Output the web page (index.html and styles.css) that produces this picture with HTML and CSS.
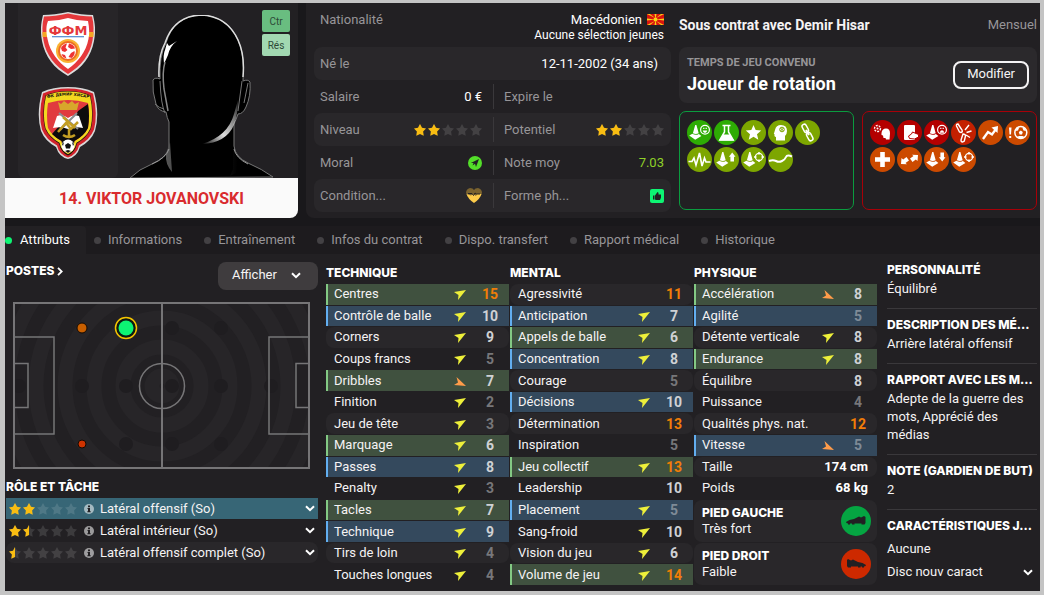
FILE: index.html
```html
<!DOCTYPE html>
<html lang="fr">
<head>
    <meta charset="UTF-8">
    <meta name="viewport" content="width=device-width, initial-scale=1.0">
    <title>Viktor Jovanovski</title>
    <link rel="stylesheet" href="styles.css">
</head>
<body>
    <!-- shared icons -->
    <svg class="sprite" aria-hidden="true">
        <defs>
            <path id="star" d="M6 0l2 3.700 4 .7-2.900 3 .6 4.300L6 9.900l-3.700 1.800.6-4.300L0 4.400l4-.7z"/>
            <g id="five">
                <use href="#star"/><use href="#star" x="14"/><use href="#star" x="28"/><use href="#star" x="42"/><use href="#star" x="56"/>
            </g>
            <symbol id="up" viewBox="0 0 12 10"><path fill="#eef03a" d="M0 2L12 0 4 10 4.500 5z"/></symbol>
            <symbol id="down" viewBox="0 0 12 10"><path fill="#ff9c4a" d="M2.500 0L12 9 0 8 4 5.500z"/></symbol>
            <symbol id="chevron" viewBox="0 0 10 7"><path fill="none" stroke="#fff" stroke-width="2" d="M1 1.200l4 4 4-4"/></symbol>
            <symbol id="info" viewBox="0 0 10 10"><circle cx="5" cy="5" r="5" fill="#fff" fill-opacity=".55"/><path fill="#222023" d="M4 1.500h2v1.700H4zM3.500 4H6v3.200h.7v1.100H3.300V7.200H4V5h-.5z"/></symbol>
            <path id="cone" fill="#fff" d="M8.200 5h1.200l2.300 8.300q-2.900 1.600-5.800 0zM5.400 13.800l-3.200 1.700 6 4.200 6.200-3.800-2.500-2q-3.200 1.800-6.500-.1z"/>
        </defs>
    </svg>

    <main class="screen">
        <section class="top">
            <div class="profile">
                <div class="photo">
                    <div class="badges">
                        <svg class="badge-nation" viewBox="0 0 54 64">
                            <path fill="#ddd" d="M27 0q14 3 25 3c2 9 3 15 1 26-3 16-12 27-26 35C13 56 4 45 1 29-1 18 0 12 2 3q11 0 25-3z"/>
                            <path fill="#e5383b" d="M27 1.500q13 3 24 3c2 8 2 15 .5 24C49 43 40 54 27 62 14 54 5 43 2.500 28.500 1 19.500 1 12.500 3 4.500q11 0 24-3z"/>
                            <path fill="#f6a623" d="M1.500 20h5v5h-5zM47.500 20h5v5h-5z"/>
                            <path fill="#fff" d="M27 6q10 3 20 3 2 10 .5 18C45 40 37 50 27 57 17 50 9 40 6.500 27 5 19 5 14 7 9q10 0 20-3z"/>
                            <text x="27" y="23" class="ffm">ФФМ</text>
                            <path fill="#2c6fc4" d="M11 24.300h32v1H11z"/>
                            <circle cx="27" cy="39" r="12" fill="#f9b233"/>
                            <circle cx="27" cy="39" r="10" fill="#ee6c23"/>
                            <circle cx="27" cy="39" r="8" fill="#fff"/>
                            <path fill="#e33" d="M20 36q2-4 6-4.500l-1.500 4 2 2.500-2.500 2-3-1zM28 31.500q5 1 6 5l-4 .5-3-2zM33.500 39q1 4-3 7l-3-1 2.500-4zM20.500 42l3.500 1 1.500 3.500q-4-1-5-4.500z"/>
                        </svg>
                        <svg class="badge-club" viewBox="0 0 60 72">
                            <path fill="#d8d8d8" d="M30 0q15 0 26 5 6 22 1 39-4 10-15 16-3 10-12 12-9-2-12-12Q7 54 3 44-2 27 4 5 15 0 30 0z"/>
                            <path fill="#d3232b" d="M30 1.500q14 0 25 5 5 21 1 36-4 10-15 16-2 9-11 12-9-3-11-12Q8 52.500 4 42.500q-4-15 1-36 11-5 25-5z"/>
                            <path fill="#151210" d="M30 4q13 0 22.500 4.500 4 19 .5 33-4 9-14 15-2 9-9 12-7-3-9-12-10-6-14-15-3.500-14 .5-33Q17 4 30 4z"/>
                            <path fill="#f4d81f" d="M30 4.500q13 0 22 4.300 4 18.500.5 32.500-4 9-14 14.500-2 8.500-8.500 11.500-6.500-3-8.500-11.500-10-5.500-14-14.500Q4 27.300 8 8.800 17 4.500 30 4.500z"/>
                            <path fill="#e13a3e" d="M30 13q-10 0-20 3-2 12 0 25 4 8 13.500 13 1.500 9 6.500 12 5-3 6.500-12Q46 49 50 41q2-13 0-25-10-3-20-3z"/>
                            <path fill="#0d0c0c" d="M50 17l-10 7-4 8-14 6-8 9q4 4 9.500 7 1.500 9 6.500 12 5-3 6.500-12Q46 49 50 41q2-12 0-24z"/>
                            <path id="arc" fill="none" d="M4 13q26-9 52 0"/>
                            <text class="club-name"><textPath href="#arc" startOffset="50%">ФК ДЕМИР ХИСАР</textPath></text>
                            <path fill="#d8a72b" d="M20 15l3 2 3-3 4 3 4-3 3 3 4-2-2 8H22z"/>
                            <path fill="#fff" d="M15 41l4-12q6-2 11 2 5-4 11-2l4 12q-8-2-15 1-7-3-15-1z"/>
                            <path fill="none" stroke="#8a8d92" stroke-width="2" d="M21 26l19 16M39 26L22 43"/>
                            <path fill="none" stroke="#c39d22" stroke-width="2.500" d="M20 45l8-9 5 6 7-7M25 30l12 11M31 42v8M25 48q6 4 12 0"/>
                            <circle cx="30" cy="59" r="6.500" fill="#fff"/>
                            <path fill="#111" d="M30 56l3 2-1 3.500h-4L27 58zM24 57l2-2-1 4zM36 57l-2-2 1 4zM27 64l3-1 3 1-3 1.500z"/>
                        </svg>
                    </div>
                    <svg class="portrait" viewBox="0 0 150 163">
                        <defs>
                            <linearGradient id="jaw" x1="0" y1="1" x2="1" y2="0">
                                <stop offset="0" stop-color="#fff" stop-opacity="0"/>
                                <stop offset=".4" stop-color="#ddd"/>
                                <stop offset="1" stop-color="#fff" stop-opacity=".1"/>
                            </linearGradient>
                            <linearGradient id="neck">
                                <stop offset="0" stop-color="#555"/>
                                <stop offset="1" stop-color="#000"/>
                            </linearGradient>
                        </defs>
                        <path fill="#000" stroke="#777" d="M2 163q9-9 22-14 14-6 17-16v-26q-2-4-3-10-8-1-10-8-4-12-3-24 2-3 7-1-1-23 6-36Q46 1 73 0q26 1 37 25 7 15 5 41 5-2 7 1 1 14-4 25-3 7-8 7-2 6-4 10v22q1 11 14 17 14 6 25 14z"/>
                        <path fill="none" stroke="#ddd" stroke-width="1.500" d="M31 62q-1-21 6-34Q46 1 73 0q26 1 37 25 7 15 5 37"/>
                        <path fill="none" stroke="#777" d="M32 66q1 24 5 32M114 66l-4 30M27 89q4 4 9 5M120 68l-4 20"/>
                        <path fill="#fff" d="M39 28l2 3 8-5q-7 5-9 14l-4 9q-1-10 1-14z"/>
                        <path fill="none" stroke="#888" stroke-width="1.500" d="M37 47q-3 10-1 27l4 22"/>
                        <path fill="url(#jaw)" d="M74 129q24-1 32-19 4-11 4-25l-4 14q-6 22-32 30z"/>
                        <path fill="url(#neck)" d="M38 139q-1 10 6 18l-2-30zM105 132v22l-3 7 6-3 2-16z"/>
                        <path fill="none" stroke="#999" d="M24 149q14-6 17-15M106 134q2 9 14 15"/>
                    </svg>
                    <div class="tags">
                        <span class="tag">Ctr</span>
                        <span class="tag light">Rés</span>
                    </div>
                </div>
                <h1 class="player-name">14. VIKTOR JOVANOVSKI</h1>
            </div>

            <div class="panel">
                <dl class="facts">
                    <div class="fact nation">
                        <dt>Nationalité</dt>
                        <dd>
                            <span class="country">Macédonien
                                <svg class="flag" viewBox="0 0 17 11"><path fill="#d9130f" d="M0 0h17v11H0z"/><path fill="#f8d316" d="M0 0h3l5 4zM17 0h-3L9 4zM0 11h3l5-4zM17 11h-3L9 7zM0 4.500v2l8-1zM17 4.500v2l-8-1zM7.500 0h2l-1 5zM7.500 11h2l-1-5z"/><circle cx="8.500" cy="5.500" r="2" fill="#f8d316"/></svg>
                            </span>
                            <span class="small">Aucune sélection jeunes</span>
                        </dd>
                    </div>
                    <div class="fact shade born"><dt>Né le</dt><dd>12-11-2002 (34 ans)</dd></div>
                    <div class="pair">
                        <div class="fact"><dt>Salaire</dt><dd>0 €</dd></div>
                        <div class="fact"><dt>Expire le</dt><dd></dd></div>
                    </div>
                    <div class="pair shade">
                        <div class="fact"><dt>Niveau</dt><dd><svg class="stars" viewBox="0 0 68 12"><use href="#five" class="off"/><svg width="26" height="12"><use href="#five" class="on"/></svg></svg></dd></div>
                        <div class="fact"><dt>Potentiel</dt><dd><svg class="stars" viewBox="0 0 68 12"><use href="#five" class="off"/><svg width="26" height="12"><use href="#five" class="on"/></svg></svg></dd></div>
                    </div>
                    <div class="pair">
                        <div class="fact"><dt>Moral</dt><dd><svg class="state" viewBox="0 0 14 14"><circle cx="7" cy="7" r="7" fill="#53de29"/><path fill="#222023" d="M11 3L8 11 7 7.800 4.500 9.500 5.500 7 2.800 7z"/></svg></dd></div>
                        <div class="fact"><dt>Note moy</dt><dd class="rating">7.03</dd></div>
                    </div>
                    <div class="pair shade">
                        <div class="fact"><dt>Condition...</dt><dd><svg class="heart" viewBox="0 0 16 15"><path fill="#7b632f" d="M0 5q0-4 4-5 3 0 4 2 1-2 4-2 4 1 4 5L14 9H2z"/><path fill="#fdcb4b" d="M.500 6L5 7.500l2-1.500 3 2 1-2 4.500 0Q14 11 8 15 2 11 .5 6z"/><path fill="none" stroke="#222023" d="M2 5.500h4l1.500 2L9 5l1.500 1H14"/></svg></dd></div>
                        <div class="fact"><dt>Forme ph...</dt><dd><svg class="state" viewBox="0 0 14 14"><rect width="14" height="14" rx="2" fill="#0df573"/><path fill="#222023" d="M3 6.500h1.500v4H3zM5 6.500L7.500 3q1.500 0 1 2.500H11v3L10 11H6l-1-.5z"/></svg></dd></div>
                    </div>
                </dl>

                <div class="contract">
                    <div class="contract-head">
                        <h2>Sous contrat avec Demir Hisar</h2>
                        <span>Mensuel</span>
                    </div>
                    <div class="playtime">
                        <div>
                            <h3>TEMPS DE JEU CONVENU</h3>
                            <p>Joueur de rotation</p>
                        </div>
                        <button class="edit">Modifier</button>
                    </div>
                    <div class="traits">
                        <div class="trait-box good">
                            <svg class="strong" viewBox="0 0 25 25"><circle cx="12.500" cy="12.500" r="12.500"/><use href="#cone"/><circle cx="18" cy="9.800" r="4.400" fill="none" stroke="#fff" stroke-width="1.200"/><path fill="#fff" d="M15.700 10.500h4.600q-.6 2.400-2.300 2.400t-2.300-2.400zM16.200 7.800h1.200V9h-1.200zM18.600 7.800h1.200V9h-1.200z"/></svg>
                            <svg class="strong" viewBox="0 0 25 25"><circle cx="12.500" cy="12.500" r="12.500"/><path fill="none" stroke="#fff" stroke-width="1.500" d="M8.500 5.500h8M10.500 6v6L5.800 20h13.400L14.500 12V6"/><path fill="#fff" d="M9 14.500h7l4 6H5z"/></svg>
                            <svg viewBox="0 0 25 25"><circle cx="12.500" cy="12.500" r="12.500"/><path fill="#fff" d="M12.500 5l2.200 5 5.500.5-4.200 3.700 1.300 5.500-4.800-3-4.800 3L9 14.200l-4.200-3.700 5.500-.5z"/></svg>
                            <svg viewBox="0 0 25 25"><circle cx="12.500" cy="12.500" r="12.500"/><path fill="#fff" d="M8 20.500V17q-2 0-1.500-3H5.800L7 10q1-5 6-5 6 0 6 6 0 3-2 5v4.500z"/><circle cx="14" cy="9.500" r="2.300" fill="none" stroke="#7da600"/><path stroke="#7da600" d="M12.500 8l3 3M15.500 8l-3 3"/></svg>
                            <svg viewBox="0 0 25 25"><circle cx="12.500" cy="12.500" r="12.500"/><g fill="none" stroke="#fff" stroke-width="1.500" transform="rotate(-28 12.500 12.500)"><rect x="10.300" y="3.500" width="4.400" height="8.500" rx="2"/><rect x="10.300" y="13" width="4.400" height="8.500" rx="2"/><path stroke-width="2" d="M12.500 9.500v6"/></g></svg>
                            <svg viewBox="0 0 25 25"><circle cx="12.500" cy="12.500" r="12.500"/><path fill="none" stroke="#fff" stroke-width="1.600" d="M1.500 14.500H5L7 11l2 7 3.500-12L15 19l2.500-8 1.500 4h4.500"/></svg>
                            <svg viewBox="0 0 25 25"><circle cx="12.500" cy="12.500" r="12.500"/><use href="#cone"/><path fill="#fff" d="M18.200 5.500l3.300 4.300h-1.500v4.700h-3.600V9.800h-1.500z"/></svg>
                            <svg viewBox="0 0 25 25"><circle cx="12.500" cy="12.500" r="12.500"/><use href="#cone"/><circle cx="18" cy="10" r="3.600" fill="none" stroke="#fff" stroke-width="1.200"/><path stroke="#fff" stroke-width="1.500" d="M18 5v2.500M18 12.500V15M13 10h2.500M20.500 10H23"/></svg>
                            <svg viewBox="0 0 25 25"><circle cx="12.500" cy="12.500" r="12.500"/><path fill="none" stroke="#fff" stroke-width="2" d="M1 14q4-1.500 7 0t6 0 4-4 6-.5"/></svg>
                        </div>
                        <div class="trait-box bad">
                            <svg class="strong" viewBox="0 0 25 25"><circle cx="12.500" cy="12.500" r="12.500"/><circle cx="7.500" cy="8.500" r="3" fill="none" stroke="#fff" stroke-width="1.300" stroke-dasharray="2 1"/><circle cx="7.500" cy="8.500" r="1" fill="#fff"/><path fill="#fff" d="M11.500 13q.5-4.500 4.500-4.500 4 0 4 5l-.5 6H16l-.5-1.500h-2l-.5-2.500-1.500-.5z"/></svg>
                            <svg class="strong" viewBox="0 0 25 25"><circle cx="12.500" cy="12.500" r="12.500"/><rect x="7" y="5" width="11" height="15" rx="1" fill="#fff"/><path fill="#fff" stroke="#b40000" d="M11.500 16l3-2 1-2 6 2.500v2.500l-4 2-5-.5z"/></svg>
                            <svg class="strong" viewBox="0 0 25 25"><circle cx="12.500" cy="12.500" r="12.500"/><use href="#cone"/><circle cx="18" cy="9.800" r="4.400" fill="none" stroke="#fff" stroke-width="1.200"/><path fill="#fff" d="M15.700 12.700q.6-2.400 2.300-2.400t2.300 2.400zM16.200 7.800h1.200V9h-1.200zM18.600 7.800h1.200V9h-1.200z"/></svg>
                            <svg class="medium" viewBox="0 0 25 25"><circle cx="12.500" cy="12.500" r="12.500"/><g fill="none" stroke="#fff" stroke-width="1.400"><path d="M7 4l4 6q1 2-1 2.500L8.500 12 5.500 6Q5 4 7 4zM12 14l-2 6q0 2 1.500 2l1.800-1 1.200-5q0-2-2.500-2zM14 10l4-5M15.500 12.500l5-1.500M15 15l4 2.500"/></g></svg>
                            <svg viewBox="0 0 25 25"><circle cx="12.500" cy="12.500" r="12.500"/><path fill="none" stroke="#fff" stroke-width="2.300" d="M5 19l5-7 4 2.500L18 9"/><path fill="#fff" d="M13.500 7.500L20 6l-.5 7z"/></svg>
                            <svg viewBox="0 0 25 25"><circle cx="12.500" cy="12.500" r="12.500"/><path fill="#fff" d="M4 7.500h2.500l-.5 7H4.500zM4.200 16h2v2h-2z"/><circle cx="15.800" cy="12.500" r="6" fill="none" stroke="#fff" stroke-width="1.500"/><path fill="#fff" d="M15.800 10.500l2 1.500-.8 2.500h-2.400l-.8-2.500zM10.500 11l1.500-3.500 2 .5-1 2.500zM21 11l-1.500-3.500-2 .5 1 2.500zM12 17l2-1h3.500l2 1-3.700 2z"/></svg>
                            <svg viewBox="0 0 25 25"><circle cx="12.500" cy="12.500" r="12.500"/><path fill="#fff" d="M10.200 5h4.600v5.200H20v4.600h-5.200V20h-4.600v-5.200H5v-4.600h5.200z"/></svg>
                            <svg viewBox="0 0 25 25"><circle cx="12.500" cy="12.500" r="12.500"/><path fill="#fff" d="M4 17l.5-6 1.700 1.500L9.500 10l2.500 3.500L8.500 16l1.500 1.200zM21 8l-.5 6-1.700-1.500-3.300 2.500-2.500-3.500L16.500 9 15 7.800z"/></svg>
                            <svg viewBox="0 0 25 25"><circle cx="12.500" cy="12.500" r="12.500"/><use href="#cone"/><path fill="#fff" d="M18.200 14.500l3.300-4.300h-1.500V5.500h-3.600v4.700h-1.500z"/></svg>
                            <svg viewBox="0 0 25 25"><circle cx="12.500" cy="12.500" r="12.500"/><use href="#cone"/><circle cx="18" cy="10" r="3.600" fill="none" stroke="#fff" stroke-width="1.200"/><path stroke="#fff" stroke-width="1.500" d="M18 5v2.500M18 12.500V15M13 10h2.500M20.500 10H23"/></svg>
                        </div>
                    </div>
                </div>
            </div>
        </section>

        <nav class="tabs">
            <a href="#" class="active">Attributs</a>
            <a href="#">Informations</a>
            <a href="#">Entraînement</a>
            <a href="#">Infos du contrat</a>
            <a href="#">Dispo. transfert</a>
            <a href="#">Rapport médical</a>
            <a href="#">Historique</a>
        </nav>

        <section class="content">
            <div class="positions">
                <div class="positions-head">
                    <a href="#" class="heading">POSTES <svg class="next" viewBox="0 0 6 9"><path fill="none" stroke="#fff" stroke-width="1.800" d="M1 .800l3.700 3.700L1 8.200"/></svg></a>
                    <button class="show">Afficher <svg class="chevron"><use href="#chevron"/></svg></button>
                </div>
                <svg class="pitch" viewBox="0 0 297 167">
                    <clipPath id="field"><path d="M0 0h297v167H0z"/></clipPath>
                    <g clip-path="url(#field)" fill="none" stroke="#272528" stroke-width="15">
                        <circle cx="149" cy="84" r="10"/>
                        <circle cx="149" cy="84" r="39"/>
                        <circle cx="149" cy="84" r="68"/>
                        <circle cx="149" cy="84" r="97"/>
                        <circle cx="149" cy="84" r="126"/>
                        <circle cx="149" cy="84" r="155"/>
                    </g>
                    <g fill="#1f1d20">
                        <circle cx="6" cy="84" r="7"/><circle cx="69" cy="84" r="7"/><circle cx="113" cy="84" r="7"/>
                        <circle cx="159" cy="84" r="7"/><circle cx="208" cy="84" r="7"/><circle cx="258" cy="84" r="7"/>
                        <circle cx="159" cy="26" r="7"/><circle cx="208" cy="26" r="7"/>
                        <circle cx="113" cy="142" r="7"/><circle cx="159" cy="142" r="7"/><circle cx="208" cy="142" r="7"/>
                    </g>
                    <g fill="none" stroke="#767577" stroke-width="1.500">
                        <path stroke-width="2" d="M1 1h295v165H1zM149 1v165"/>
                        <circle cx="149" cy="84" r="22.500"/>
                        <path d="M1 35h40v97H1M1 61.500h14v44H1M296 35h-40v97h40M296 61.500h-13v44h13"/>
                    </g>
                    <circle cx="69" cy="26" r="5" fill="#c85f00" stroke="#120a04"/>
                    <circle cx="69" cy="142" r="4" fill="#cf3300" stroke="#120a04"/>
                    <circle cx="113" cy="26" r="10.500" fill="#0d1a12" stroke="#f5c400" stroke-width="1.500"/>
                    <circle cx="113" cy="26" r="7.500" fill="#0df573"/>
                </svg>
                <h2 class="heading">RÔLE ET TÂCHE</h2>
                <div class="roles">
                    <button class="role selected"><svg class="stars" viewBox="0 0 68 12"><use href="#five" class="off"/><svg width="26" height="12"><use href="#five" class="on"/></svg></svg><svg class="info"><use href="#info"/></svg>Latéral offensif (So)<svg class="chevron"><use href="#chevron"/></svg></button>
                    <button class="role"><svg class="stars" viewBox="0 0 68 12"><use href="#five" class="off"/><svg width="20" height="12"><use href="#five" class="on"/></svg></svg><svg class="info"><use href="#info"/></svg>Latéral intérieur (So)<svg class="chevron"><use href="#chevron"/></svg></button>
                    <button class="role shade"><svg class="stars" viewBox="0 0 68 12"><use href="#five" class="off"/><svg width="6" height="12"><use href="#five" class="on"/></svg></svg><svg class="info"><use href="#info"/></svg>Latéral offensif complet (So)<svg class="chevron"><use href="#chevron"/></svg></button>
                </div>
            </div>

            <div class="attributes">
                <table>
                    <caption class="heading">TECHNIQUE</caption>
                    <tbody>
                        <tr class="key"><th>Centres</th><td><svg class="arrow"><use href="#up"/></svg></td><td class="num high">15</td></tr>
                        <tr class="useful"><th>Contrôle de balle</th><td><svg class="arrow"><use href="#up"/></svg></td><td class="num">10</td></tr>
                        <tr><th>Corners</th><td><svg class="arrow"><use href="#up"/></svg></td><td class="num">9</td></tr>
                        <tr><th>Coups francs</th><td><svg class="arrow"><use href="#up"/></svg></td><td class="num low">5</td></tr>
                        <tr class="key"><th>Dribbles</th><td><svg class="arrow"><use href="#down"/></svg></td><td class="num">7</td></tr>
                        <tr><th>Finition</th><td><svg class="arrow"><use href="#up"/></svg></td><td class="num low">2</td></tr>
                        <tr><th>Jeu de tête</th><td><svg class="arrow"><use href="#up"/></svg></td><td class="num low">3</td></tr>
                        <tr class="key"><th>Marquage</th><td><svg class="arrow"><use href="#up"/></svg></td><td class="num">6</td></tr>
                        <tr class="useful"><th>Passes</th><td><svg class="arrow"><use href="#up"/></svg></td><td class="num">8</td></tr>
                        <tr><th>Penalty</th><td><svg class="arrow"><use href="#up"/></svg></td><td class="num low">3</td></tr>
                        <tr class="key"><th>Tacles</th><td><svg class="arrow"><use href="#up"/></svg></td><td class="num">7</td></tr>
                        <tr class="useful"><th>Technique</th><td><svg class="arrow"><use href="#up"/></svg></td><td class="num">9</td></tr>
                        <tr><th>Tirs de loin</th><td><svg class="arrow"><use href="#up"/></svg></td><td class="num low">4</td></tr>
                        <tr><th>Touches longues</th><td><svg class="arrow"><use href="#up"/></svg></td><td class="num low">4</td></tr>
                    </tbody>
                </table>
                <table>
                    <caption class="heading">MENTAL</caption>
                    <tbody>
                        <tr><th>Agressivité</th><td></td><td class="num high">11</td></tr>
                        <tr class="useful"><th>Anticipation</th><td><svg class="arrow"><use href="#up"/></svg></td><td class="num">7</td></tr>
                        <tr class="key"><th>Appels de balle</th><td><svg class="arrow"><use href="#up"/></svg></td><td class="num">6</td></tr>
                        <tr class="useful"><th>Concentration</th><td><svg class="arrow"><use href="#up"/></svg></td><td class="num">8</td></tr>
                        <tr><th>Courage</th><td></td><td class="num low">5</td></tr>
                        <tr class="useful"><th>Décisions</th><td><svg class="arrow"><use href="#up"/></svg></td><td class="num">10</td></tr>
                        <tr><th>Détermination</th><td></td><td class="num high">13</td></tr>
                        <tr><th>Inspiration</th><td></td><td class="num low">5</td></tr>
                        <tr class="key"><th>Jeu collectif</th><td><svg class="arrow"><use href="#up"/></svg></td><td class="num high">13</td></tr>
                        <tr><th>Leadership</th><td></td><td class="num">10</td></tr>
                        <tr class="useful"><th>Placement</th><td><svg class="arrow"><use href="#up"/></svg></td><td class="num low">5</td></tr>
                        <tr><th>Sang-froid</th><td><svg class="arrow"><use href="#up"/></svg></td><td class="num">10</td></tr>
                        <tr><th>Vision du jeu</th><td><svg class="arrow"><use href="#up"/></svg></td><td class="num">6</td></tr>
                        <tr class="key"><th>Volume de jeu</th><td><svg class="arrow"><use href="#up"/></svg></td><td class="num high">14</td></tr>
                    </tbody>
                </table>
                <table>
                    <caption class="heading">PHYSIQUE</caption>
                    <tbody>
                        <tr class="key"><th>Accélération</th><td><svg class="arrow"><use href="#down"/></svg></td><td class="num">8</td></tr>
                        <tr class="useful"><th>Agilité</th><td></td><td class="num low">5</td></tr>
                        <tr><th>Détente verticale</th><td><svg class="arrow"><use href="#up"/></svg></td><td class="num">8</td></tr>
                        <tr class="key"><th>Endurance</th><td><svg class="arrow"><use href="#up"/></svg></td><td class="num">8</td></tr>
                        <tr><th>Équilibre</th><td></td><td class="num">8</td></tr>
                        <tr><th>Puissance</th><td></td><td class="num low">4</td></tr>
                        <tr><th>Qualités phys. nat.</th><td></td><td class="num high">12</td></tr>
                        <tr class="useful"><th>Vitesse</th><td><svg class="arrow"><use href="#down"/></svg></td><td class="num low">5</td></tr>
                        <tr><th>Taille</th><td class="measure">174 cm</td></tr>
                        <tr><th>Poids</th><td class="measure">68 kg</td></tr>
                        <tr class="foot"><th><span class="heading">PIED GAUCHE</span>Très fort</th><td><svg class="boot" viewBox="0 0 30 30"><circle cx="15" cy="15" r="15" fill="#05a542"/><path fill="#222023" d="M5 16q3-2.500 8-3l5-2.500 2 1 3-1.500 1.500 1v6l-1 1.500h-3v-1h-7v1h-2.500v-1H9v1H7v-1q-2-.5-2-1.500z"/></svg></td></tr>
                        <tr class="foot"><th><span class="heading">PIED DROIT</span>Faible</th><td><svg class="boot" viewBox="0 0 30 30"><circle cx="15" cy="15" r="15" fill="#cd2900"/><path fill="#222023" d="M25 16q-3-2.500-8-3l-5-2.500-2 1L7 10l-1 1v6l1 1.500h3v-1h7v1h2.500v-1H21v1h2v-1q2-.5 2-1.500z"/></svg></td></tr>
                    </tbody>
                </table>
            </div>

            <aside class="notes">
                <section><h2 class="heading">PERSONNALITÉ</h2><p>Équilibré</p></section>
                <section><h2 class="heading">DESCRIPTION DES MÉ...</h2><p>Arrière latéral offensif</p></section>
                <section><h2 class="heading">RAPPORT AVEC LES M...</h2><p>Adepte de la guerre des mots, Apprécié des médias</p></section>
                <section><h2 class="heading">NOTE (GARDIEN DE BUT)</h2><p>2</p></section>
                <section class="habits"><h2 class="heading">CARACTÉRISTIQUES J...</h2><p>Aucune</p>
                    <button>Disc nouv caract <svg class="chevron"><use href="#chevron"/></svg></button>
                </section>
            </aside>
        </section>
    </main>
</body>
</html>
```
FILE: styles.css
```css
* {
    box-sizing: border-box;
    margin: 0;
    padding: 0;
}

body {
    min-height: 100vh;
    display: flex;
    padding: 3px 4px 4px 5px;
    background: #c4c4c4;
    color: #f5f3f4;
    font: 13px/18px Roboto, "Liberation Sans", sans-serif;
}

svg {
    display: block;
    flex: none;
}

a {
    color: inherit;
    text-decoration: none;
}

button {
    border: none;
    background: none;
    color: inherit;
    font: inherit;
    text-align: left;
    cursor: pointer;
}

.sprite {
    position: absolute;
    width: 0;
    height: 0;
}

.screen {
    flex: 1;
    min-width: 0;
    display: flex;
    flex-direction: column;
    background: #19181b;
}

.heading {
    font: 800 12px/18px Inter, sans-serif;
    color: #fff;
}

.shade {
    background: #29272a;
    border-radius: 8px;
}

/* player header */
.top {
    display: grid;
    grid-template-columns: 293fr 734fr;
    gap: 8px;
}

.profile {
    display: flex;
    flex-direction: column;
    background: #222023;
    border-radius: 0 0 8px 0;
    overflow: hidden;
}

.photo {
    flex: 1;
    display: flex;
    padding: 0 8px 0 13px;
}

.badges {
    flex: none;
    display: flex;
    flex-direction: column;
    align-items: center;
    gap: 11px;
    width: 100px;
    padding-top: 9px;
    background: #272528;
    border-radius: 0 0 6px 6px;
}

.badge-nation {
    width: 54px;
    height: 64px;
}

.badge-club {
    width: 60px;
    height: 72px;
}

.ffm {
    font: bold 13px "DejaVu Sans", sans-serif;
    fill: #e5383b;
    text-anchor: middle;
}

.club-name {
    font: bold 4px "DejaVu Sans", sans-serif;
    fill: #151210;
    text-anchor: middle;
}

/* the shoulders reach under the tags */
.portrait {
    align-self: flex-end;
    width: 150px;
    height: 163px;
    margin: 0 -16px 0 auto;
}

.tags {
    display: flex;
    flex-direction: column;
    gap: 2px;
    padding-top: 7px;
}

.tag {
    width: 28px;
    height: 22px;
    border-radius: 2px;
    background: #69bd80;
    color: #2d4a37;
    font-size: 10px;
    line-height: 23px;
    text-align: center;
}

.tag.light {
    background: #a2d8b1;
}

.player-name {
    height: 40px;
    background: #fafafa;
    color: #d92b2e;
    font-size: 16px;
    line-height: 41px;
    text-align: center;
}

.panel {
    display: grid;
    grid-template-columns: 357fr 358fr;
    gap: 8px;
    padding: 0 3px 6px 8px;
    background: #222023;
    border-radius: 0 0 0 8px;
}

.fact {
    display: flex;
    align-items: center;
    justify-content: space-between;
    height: 33px;
    padding: 0 7px 0 6px;
}

.fact dt {
    color: #979598;
}

.fact dd {
    color: #fff;
}

.fact.nation {
    align-items: flex-start;
    height: 44px;
    padding-top: 8px;
}

.nation dd {
    text-align: right;
}

.country {
    display: flex;
    align-items: center;
    justify-content: flex-end;
    gap: 5px;
    height: 17px;
}

.flag {
    width: 17px;
    height: 11px;
}

.small {
    display: block;
    font-size: 12px;
    line-height: 14px;
}

.fact.born {
    padding-right: 13px;
}

.pair {
    display: grid;
    grid-template-columns: 180fr 177fr;
}

.pair .fact:first-child {
    padding-right: 12px;
    background: linear-gradient(#3a383b, #3a383b) right / 1px 25px no-repeat;
}

.pair .fact:last-child {
    padding-left: 10px;
}

.stars {
    width: 68px;
    height: 12px;
}

.off {
    fill: #fff;
    fill-opacity: .12;
}

.on {
    fill: #f9bd12;
}

.state {
    width: 14px;
    height: 14px;
}

.heart {
    width: 16px;
    height: 15px;
}

.fact .rating {
    color: #8fd028;
}

/* contract */
.contract {
    display: flex;
    flex-direction: column;
}

.contract-head {
    display: flex;
    justify-content: space-between;
    align-items: center;
    height: 44px;
}

.contract-head h2 {
    font-size: 14px;
}

.contract-head span {
    color: #979598;
}

.playtime {
    display: flex;
    justify-content: space-between;
    align-items: center;
    height: 56px;
    margin-bottom: 8px;
    padding: 0 8px;
    background: #2b292c;
    border-radius: 8px;
}

.playtime h3 {
    color: #979598;
    font-size: 11px;
    line-height: 18px;
}

.playtime p {
    color: #fff;
    font-size: 18px;
    font-weight: bold;
    line-height: 24px;
}

.edit {
    height: 28px;
    padding: 0 12px 2px;
    border: 2px solid #f5f3f4;
    border-radius: 8px;
}

.traits {
    flex: 1;
    display: grid;
    grid-template-columns: 1fr 1fr;
    gap: 8px;
    margin-bottom: 2px;
}

.trait-box {
    display: flex;
    flex-wrap: wrap;
    align-content: flex-start;
    gap: 2px;
    padding: 8px 24px 8px 7px;
    border: 1px solid #0a9c3f;
    border-radius: 7px;
    fill: #7da600;
}

.trait-box svg {
    width: 25px;
    height: 25px;
}

.trait-box .strong {
    fill: #2eac04;
}

.trait-box.bad {
    padding-right: 4px;
    border-color: #a80008;
    fill: #cc4a00;
}

.bad .strong {
    fill: #b40000;
}

.bad .medium {
    fill: #c42000;
}

/* tabs */
.tabs {
    display: flex;
    height: 28px;
    margin-top: 8px;
    background: #1d1b1e;
}

.tabs a {
    display: flex;
    align-items: center;
    gap: 7px;
    padding: 0 14px 0 8px;
    color: #979598;
}

.tabs a::before {
    content: "";
    width: 7px;
    height: 7px;
    border-radius: 50%;
    background: #434144;
}

.tabs .active {
    padding: 0 16px 0 0;
    gap: 8px;
    background: #222023;
    border-radius: 0 4px 0 0;
    color: #fff;
}

.tabs .active::before {
    background: #0df573;
}

/* content */
.content {
    flex: 1;
    display: grid;
    grid-template-columns: minmax(0, 313fr) minmax(0, 551fr) minmax(0, 152fr);
    gap: 8px;
    padding-right: 3px;
    background: #222023;
}

.positions-head {
    display: flex;
    justify-content: space-between;
    align-items: flex-start;
    padding-top: 8px;
}

.positions > .heading,
.positions-head .heading {
    padding-left: 1px;
}

.positions-head .heading {
    display: flex;
    align-items: center;
    gap: 3px;
}

.next {
    width: 6px;
    height: 9px;
}

.show {
    display: flex;
    align-items: center;
    justify-content: space-between;
    width: 100px;
    height: 28px;
    padding: 0 17px 2px 14px;
    background: #3f3c3e;
    border-radius: 8px;
}

.chevron {
    width: 10px;
    height: 7px;
}

.pitch {
    width: calc(100% - 16px);
    margin: 12px 8px 9px;
}

.roles {
    display: flex;
    flex-direction: column;
    gap: 1px;
    padding: 2px 0 0 1px;
}

.role {
    display: flex;
    align-items: center;
    height: 21px;
    padding: 0 3px;
}

.role.selected {
    background: #376676;
}

.role .info {
    width: 10px;
    height: 10px;
    margin: 0 6px 0 7px;
}

.role .chevron {
    margin-left: auto;
}

.attributes {
    display: grid;
    grid-template-columns: repeat(3, 1fr);
    gap: 1px;
    padding: 10px 0 6px;
}

table {
    display: flex;
    flex-direction: column;
}

caption {
    display: block;
    height: 20px;
    text-align: left;
}

tbody {
    flex: 1;
    display: grid;
    grid-template-rows: repeat(14, 1fr);
    gap: 1px;
}

tr {
    display: flex;
    align-items: center;
    padding-left: 8px;
    border-radius: 8px;
}

tr:nth-child(odd),
tr.foot {
    background: #29272a;
}

tr.key {
    background: #40513f;
    border-radius: 0;
    box-shadow: inset 2px 0 #83c984;
}

tr.useful {
    background: #34495d;
    border-radius: 0;
    box-shadow: inset 2px 0 #62aef0;
}

th {
    flex: 1;
    font-weight: normal;
    text-align: left;
}

.arrow {
    width: 12px;
    height: 10px;
    margin: 2px 5px 0 0;
}

.num {
    width: 38px;
    color: #cfd1d4;
    font-size: 14px;
    font-weight: bold;
    text-align: center;
}

.num.high {
    color: #f07d08;
}

.num.low {
    color: #77777a;
}

.useful .low {
    color: #7f8b97;
}

.measure {
    padding-right: 9px;
    color: #fff;
    font-weight: bold;
}

.foot {
    grid-row: span 2;
}

.foot th {
    line-height: 16px;
}

.foot .heading {
    display: block;
    line-height: 16px;
}

.boot {
    width: 30px;
    height: 30px;
    margin-right: 6px;
}

/* right column */
.notes {
    padding-left: 2px;
}

.notes section {
    padding: 7px 0 10px;
    border-bottom: 1px solid #3a383b;
}

.notes .heading {
    margin-bottom: 1px;
    white-space: nowrap;
}

.notes .habits {
    border: none;
}

.habits .heading {
    margin-bottom: 5px;
}

.habits button {
    display: flex;
    align-items: center;
    justify-content: space-between;
    width: 100%;
    margin-top: 5px;
    padding-right: 4px;
}
```
